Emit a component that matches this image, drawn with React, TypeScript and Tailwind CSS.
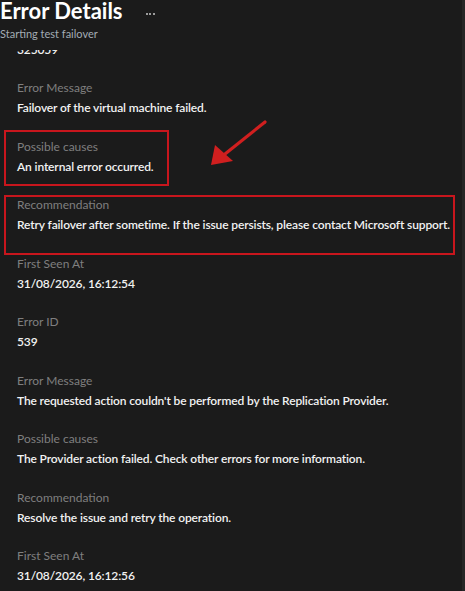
import React from "react";

type Field = { label: string; value: string };

const fields: Field[] = [
  { label: "Error ID", value: "325059" },
  { label: "Error Message", value: "Failover of the virtual machine failed." },
  { label: "Possible causes", value: "An internal error occurred." },
  {
    label: "Recommendation",
    value:
      "Retry failover after sometime. If the issue persists, please contact Microsoft support.",
  },
  { label: "First Seen At", value: "31/08/2026, 16:12:54" },
  { label: "Error ID", value: "539" },
  {
    label: "Error Message",
    value: "The requested action couldn't be performed by the Replication Provider.",
  },
  {
    label: "Possible causes",
    value: "The Provider action failed. Check other errors for more information.",
  },
  { label: "Recommendation", value: "Resolve the issue and retry the operation." },
  { label: "First Seen At", value: "31/08/2026, 16:12:56" },
];

export default function App() {
  return (
    <div className="relative flex h-[591px] w-[465px] overflow-hidden bg-[#1b1b1b] font-['Lato','Noto_Sans',sans-serif]">
      <div className="flex min-w-0 flex-1 flex-col">
        <header className="h-[50px] shrink-0">
          <div className="flex h-[22px] items-center">
            <h1 className="text-[22px] font-bold leading-[26px] text-white">Error Details</h1>
            <div className="ml-[23px] mt-[6px] flex gap-[1.5px]">
              <span className="h-[2px] w-[2px] rounded-full bg-[#c8c8c8]" />
              <span className="h-[2px] w-[2px] rounded-full bg-[#c8c8c8]" />
              <span className="h-[2px] w-[2px] rounded-full bg-[#c8c8c8]" />
            </div>
          </div>
          <p className="mt-[3.5px] text-[11px] leading-[16px] text-[#a3acb5]">
            Starting test failover
          </p>
        </header>
        <div className="min-h-0 flex-1 overflow-hidden">
          <div className="mt-[-30.5px] pl-[17px]">
            {fields.map((f, i) => (
              <div key={i} className="mb-[18.5px]">
                <div className="text-[12px] leading-[20px] text-[#7f7f7f]">{f.label}</div>
                <div className="whitespace-nowrap text-[12px] font-semibold leading-[20px] tracking-[-0.13px] text-[#f2f2f2]">
                  {f.value}
                </div>
              </div>
            ))}
          </div>
        </div>
      </div>
      <div className="w-[3px] shrink-0 bg-[#262626]" />

      {/* annotation overlays */}
      <div className="pointer-events-none absolute left-[4px] top-[130px] h-[56px] w-[165px] border-[2.5px] border-[#c8161d]" />
      <div className="pointer-events-none absolute left-[4px] top-[195px] h-[60px] w-[451px] border-[2.5px] border-[#c8161d]" />
      <svg
        className="pointer-events-none absolute left-0 top-0"
        width="465"
        height="591"
        viewBox="0 0 465 591"
      >
        <line x1="265" y1="122" x2="225" y2="154" stroke="#d01f1f" strokeWidth="3.2" strokeLinecap="round" />
        <polygon points="211,165 215,145 233,161" fill="#d01f1f" />
      </svg>
    </div>
  );
}
